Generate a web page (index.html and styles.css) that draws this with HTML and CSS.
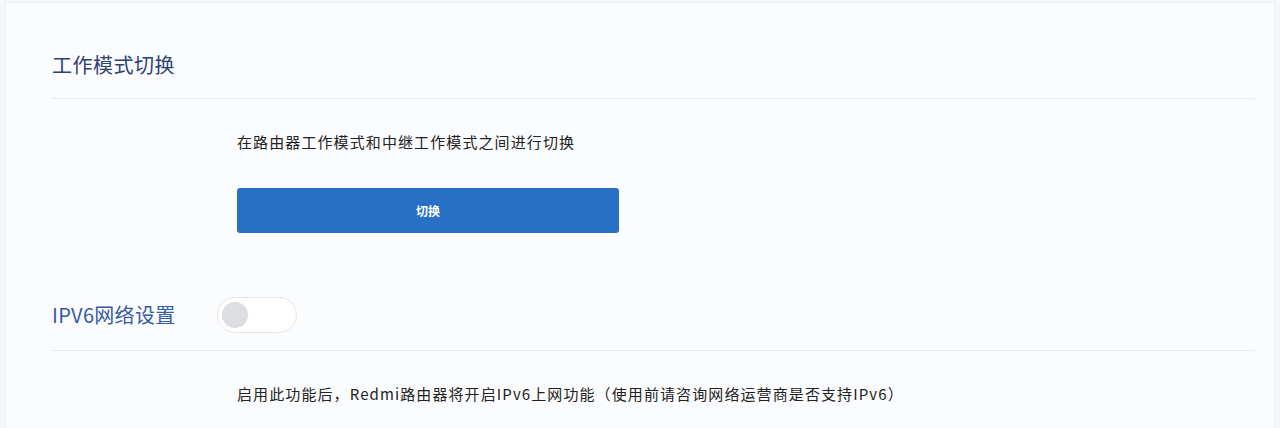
FILE: index.html
```html
<!DOCTYPE html>
<html lang="zh-CN">
  <head>
    <meta charset="UTF-8" />
    <meta name="viewport" content="width=device-width, initial-scale=1.0" />
    <title>工作模式切换</title>
    <link rel="stylesheet" href="styles.css">
  </head>
  <body>
    <div class="panel">
      <div class="section-head">
        <h2 class="section-title">工作模式切换</h2>
      </div>
      <div class="section-body">
        <p class="desc">在路由器工作模式和中继工作模式之间进行切换</p>
        <button class="btn-primary" type="button">切换</button>
      </div>

      <div class="section-head row">
        <h2 class="section-title blue">IPV6网络设置</h2>
        <span class="switch"><span class="knob"></span></span>
      </div>
      <div class="section-body">
        <p class="desc">启用此功能后，Redmi路由器将开启IPv6上网功能（使用前请咨询网络运营商是否支持IPv6）</p>
      </div>
    </div>
  </body>
</html>
```
FILE: styles.css
```css
body {
  margin: 0;
  background: #f5f7fa;
  font-family: "Noto Sans CJK SC", "Noto Sans", sans-serif;
  color: #333;
}
.panel {
  margin: 2px 5px 0;
  height: 426px;
  background: #fbfcfe;
  border-top: 1px solid #eceff3;
  border-left: 1px solid #f0f2f5;
  border-right: 1px solid #f0f2f5;
  padding: 0 19px 0 46px;
  box-sizing: border-box;
}
.section-head {
  padding: 48px 0 19px;
  border-bottom: 1px solid #e6e9ee;
}
.section-title {
  margin: 0;
  font-size: 20px;
  font-weight: 400;
  line-height: 28px;
  color: #2d4270;
  letter-spacing: 0.5px;
}
.section-title.blue {
  color: #3659a3;
  width: 165px;
  letter-spacing: 0.3px;
}
.row {
  display: flex;
  align-items: center;
  padding: 0 0 17px;
  margin-top: 64px;
}
.section-body {
  padding: 34px 0 0 185px;
}
.desc {
  margin: 0;
  font-size: 15px;
  line-height: 18px;
  letter-spacing: 1.1px;
  color: #222;
}
.btn-primary {
  display: block;
  margin-top: 37px;
  width: 382px;
  height: 45px;
  border: none;
  border-radius: 3px;
  background: #2770c6;
  color: #fff;
  font-family: inherit;
  font-size: 12px;
  font-weight: 700;
}
.switch {
  width: 80px;
  height: 36px;
  box-sizing: border-box;
  border: 1px solid #e3e6ea;
  border-radius: 18px;
  background: #fff;
  display: flex;
  align-items: center;
  padding-left: 4px;
}
.knob {
  width: 26px;
  height: 26px;
  border-radius: 50%;
  background: #dcdee2;
}
```
